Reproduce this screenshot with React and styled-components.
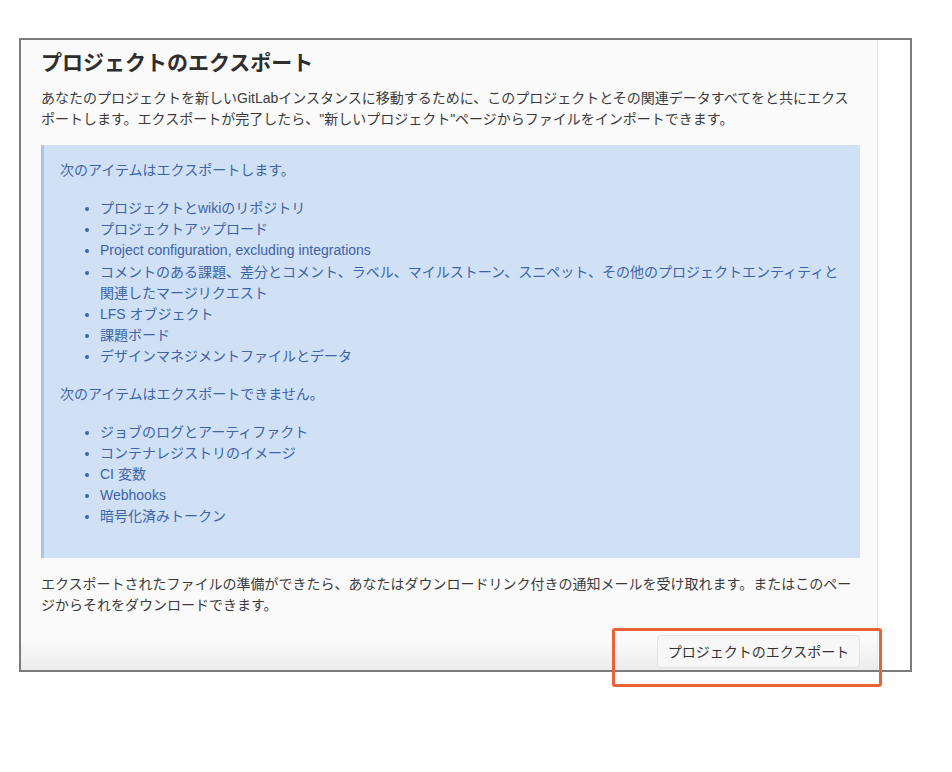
import React from "react";
import styled, { createGlobalStyle } from "styled-components";

const Global = createGlobalStyle`
  body {
    margin: 0;
    background: #fff;
    font-family: "Liberation Sans", "Noto Sans CJK JP", sans-serif;
  }
`;

const exportable = [
  "プロジェクトとwikiのリポジトリ",
  "プロジェクトアップロード",
  "Project configuration, excluding integrations",
  "コメントのある課題、差分とコメント、ラベル、マイルストーン、スニペット、その他のプロジェクトエンティティと関連したマージリクエスト",
  "LFS オブジェクト",
  "課題ボード",
  "デザインマネジメントファイルとデータ",
];

const notExportable = [
  "ジョブのログとアーティファクト",
  "コンテナレジストリのイメージ",
  "CI 変数",
  "Webhooks",
  "暗号化済みトークン",
];

function App() {
  return (
    <Page>
      <Global />
      <Frame>
        <Panel>
          <Title>プロジェクトのエクスポート</Title>
          <Text>
            あなたのプロジェクトを新しいGitLabインスタンスに移動するために、このプロジェクトとその関連データすべてをと共にエクスポートします。エクスポートが完了したら、"新しいプロジェクト"ページからファイルをインポートできます。
          </Text>
          <InfoBox>
            <InfoText>次のアイテムはエクスポートします。</InfoText>
            <List>
              {exportable.map((item) => (
                <li key={item}>{item}</li>
              ))}
            </List>
            <InfoText>次のアイテムはエクスポートできません。</InfoText>
            <List last>
              {notExportable.map((item) => (
                <li key={item}>{item}</li>
              ))}
            </List>
          </InfoBox>
          <Text>
            エクスポートされたファイルの準備ができたら、あなたはダウンロードリンク付きの通知メールを受け取れます。またはこのページからそれをダウンロードできます。
          </Text>
          <Actions>
            <Button>プロジェクトのエクスポート</Button>
          </Actions>
        </Panel>
        <Side />
      </Frame>
      <Highlight />
    </Page>
  );
}

const Page = styled.div`
  position: relative;
  height: 772px;
  padding: 38px 0 0 19px;
  box-sizing: border-box;
`;

const Frame = styled.div`
  display: flex;
  width: 893px;
  height: 634px;
  border: 2px solid #7b7b7b;
  box-sizing: border-box;
  overflow: hidden;
`;

const Panel = styled.div`
  width: 857px;
  flex-shrink: 0;
  background: linear-gradient(to bottom, #fafafa 0, #fafafa 600px, #ececec 100%);
  border-right: 1px solid #e6e6e6;
  padding: 10px 17px 0 20px;
  box-sizing: border-box;
  color: #3a3a3a;
  font-size: 14px;
  line-height: 21px;
`;

const Side = styled.div`
  flex: 1;
  background: #fff;
`;

const Title = styled.h3`
  margin: 0 0 13px;
  font-size: 21px;
  line-height: 25px;
  font-weight: bold;
  color: #2e2e2e;
`;

const Text = styled.p`
  margin: 0 0 15px;
`;

const InfoBox = styled.div`
  background: #d0e0f5;
  border-left: 3px solid #a9c4ec;
  padding: 15px 16px 14px 16px;
  margin-bottom: 16px;
  color: #3d64a8;
`;

const InfoText = styled.p`
  margin: 0 0 17px;
`;

const List = styled.ul`
  margin: 0 0 ${(p) => (p.last ? "16px" : "16px")};
  padding-left: 40px;
  li {
    line-height: 21.2px;
  }
`;

const Actions = styled.div`
  display: flex;
  justify-content: flex-end;
  margin-top: 19px;
`;

const Button = styled.button`
  width: 203px;
  height: 33px;
  border: 1px solid #e2e2e2;
  border-radius: 4px;
  background: #f7f7f7;
  color: #333;
  font-family: inherit;
  font-size: 14px;
  cursor: pointer;
`;

const Highlight = styled.div`
  position: absolute;
  left: 612px;
  top: 628px;
  width: 270px;
  height: 59px;
  border: 3px solid #ec6236;
  border-radius: 3px;
  box-sizing: border-box;
  pointer-events: none;
`;

export default App;
